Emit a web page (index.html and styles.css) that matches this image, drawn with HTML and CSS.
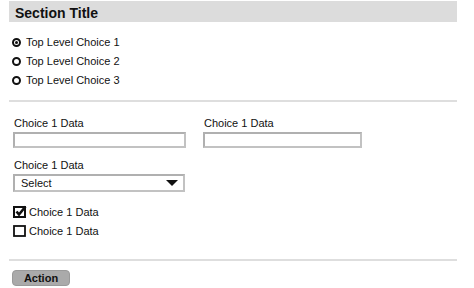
FILE: index.html
```html
<!DOCTYPE html>
<html>
<head>
<meta charset="utf-8">
<link rel="stylesheet" href="styles.css">
</head>
<body>
<div class="page">
  <div class="title-bar">Section Title</div>

  <div class="radio-list">
    <div class="choice-row"><span class="radio checked"></span><span>Top Level Choice 1</span></div>
    <div class="choice-row"><span class="radio"></span><span>Top Level Choice 2</span></div>
    <div class="choice-row"><span class="radio"></span><span>Top Level Choice 3</span></div>
  </div>

  <div class="divider divider-top"></div>

  <div class="field-row">
    <div class="field field-wide">
      <div class="label">Choice 1 Data</div>
      <div class="text-box"></div>
    </div>
    <div class="field field-narrow">
      <div class="label">Choice 1 Data</div>
      <div class="text-box"></div>
    </div>
  </div>

  <div class="field field-select">
    <div class="label">Choice 1 Data</div>
    <div class="select-box">
      <span>Select</span>
      <svg class="caret" width="12" height="6" viewBox="0 0 12 6"><polygon points="0,0 12,0 6,6" fill="#111"/></svg>
    </div>
  </div>

  <div class="check-list">
    <div class="check-row">
      <svg class="checkbox" width="14" height="13" viewBox="0 0 14 13">
        <rect x="1" y="2" width="11" height="10" fill="none" stroke="#111" stroke-width="2"/>
        <polyline points="3.5,6.5 6,9.5 12.5,1.5" fill="none" stroke="#111" stroke-width="2.6"/>
      </svg>
      <span>Choice 1 Data</span>
    </div>
    <div class="check-row">
      <svg class="checkbox" width="14" height="13" viewBox="0 0 14 13">
        <rect x="1" y="2" width="11" height="10" fill="none" stroke="#111" stroke-width="1.8"/>
      </svg>
      <span>Choice 1 Data</span>
    </div>
  </div>

  <div class="divider divider-bottom"></div>

  <div class="actions">
    <button class="action-btn">Action</button>
  </div>
</div>
</body>
</html>
```

FILE: styles.css
```css
* { box-sizing: border-box; }

html, body {
  margin: 0;
  padding: 0;
  background: #fff;
}

body {
  font-family: "Liberation Sans", Arial, sans-serif;
  font-size: 11px;
  color: #111;
}

.page {
  width: 448px;
  margin-left: 9px;
  padding-top: 1px;
}

.title-bar {
  height: 21px;
  padding: 4px 0 0 6px;
  line-height: 17px;
  background: #dcdcdc;
  font-size: 14px;
  font-weight: bold;
  color: #111;
}

.radio-list {
  margin-top: 11px;
  padding-left: 3px;
}

.choice-row {
  display: flex;
  align-items: center;
  height: 19px;
  line-height: 19px;
  gap: 5px;
}

.radio {
  width: 9px;
  height: 9px;
  border: 2px solid #111;
  border-radius: 50%;
  display: flex;
  align-items: center;
  justify-content: center;
}

.radio.checked::after {
  content: "";
  width: 3px;
  height: 3px;
  border-radius: 50%;
  background: #111;
}

.divider {
  height: 2px;
  background: #dedede;
}

.divider-top {
  margin-top: 10px;
}

.field-row {
  display: flex;
  gap: 17px;
  margin-top: 15px;
  padding-left: 4px;
}

.label {
  line-height: 13px;
  margin-bottom: 2px;
  padding-left: 1px;
}

.field-wide { width: 173px; }
.field-narrow { width: 159px; }

.text-box {
  height: 16px;
  border: 2px solid #c2c2c2;
  border-top-color: #b0b0b0;
  border-left-color: #b0b0b0;
  background: #fff;
}

.field-select {
  margin-top: 11px;
  padding-left: 4px;
  width: 176px;
}

.select-box {
  height: 18px;
  border: 2px solid #c2c2c2;
  border-top-color: #b0b0b0;
  border-left-color: #b0b0b0;
  display: flex;
  align-items: center;
  justify-content: space-between;
  padding: 0 5px 0 6px;
  font-size: 11px;
}

.caret {
  display: block;
}

.check-list {
  margin-top: 10px;
  padding-left: 4px;
}

.check-row {
  display: flex;
  align-items: center;
  height: 19px;
  gap: 2px;
}

.checkbox {
  display: block;
  margin-top: -1px;
}

.divider-bottom {
  margin-top: 19px;
}

.actions {
  margin-top: 9px;
  padding-left: 3px;
}

.action-btn {
  width: 58px;
  height: 16px;
  padding: 0;
  border: 1px solid #9a9a9a;
  border-radius: 4px;
  background: #aaaaaa;
  font-family: "Liberation Sans", Arial, sans-serif;
  font-size: 11px;
  font-weight: bold;
  color: #111;
  line-height: 14px;
}
```
